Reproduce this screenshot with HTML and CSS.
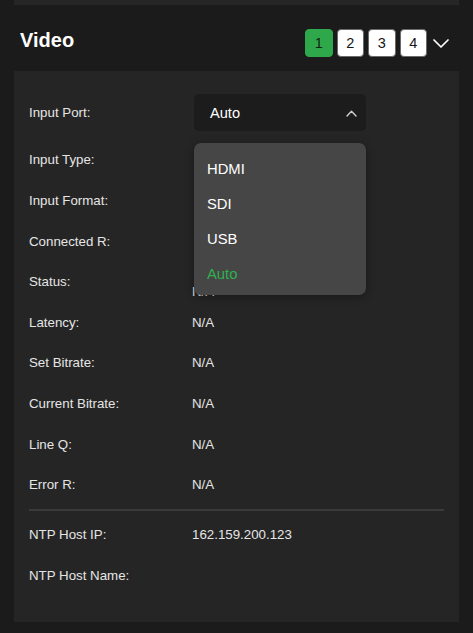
FILE: index.html
```html
<!DOCTYPE html>
<html lang="en">
<head>
<meta charset="utf-8">
<title>Video</title>
<link rel="stylesheet" href="styles.css">
</head>
<body>
<div class="prev-card"></div>
<header class="section-head">
  <h1 class="title">Video</h1>
  <div class="head-right">
    <div class="channels">
      <button class="ch active">1</button>
      <button class="ch">2</button>
      <button class="ch">3</button>
      <button class="ch">4</button>
    </div>
    <svg class="collapse" width="16" height="9" viewBox="0 0 16 9"><path d="M1 1 L8 8 L15 1" fill="none" stroke="#ffffff" stroke-width="1.7" stroke-linecap="round" stroke-linejoin="round"/></svg>
  </div>
</header>
<main class="card">
  <div class="row row-select">
    <span class="label">Input Port:</span>
    <div class="select">
      <span class="select-text">Auto</span>
      <svg class="caret" width="11" height="7" viewBox="0 0 11 7"><path d="M1 6 L5.5 1.3 L10 6" fill="none" stroke="#cfcfcf" stroke-width="1.4" stroke-linecap="round" stroke-linejoin="round"/></svg>
      <ul class="menu">
        <li class="opt">HDMI</li>
        <li class="opt">SDI</li>
        <li class="opt">USB</li>
        <li class="opt selected">Auto</li>
      </ul>
    </div>
  </div>
  <div class="row"><span class="label">Input Type:</span><span class="value"></span></div>
  <div class="row"><span class="label">Input Format:</span><span class="value"></span></div>
  <div class="row"><span class="label">Connected R:</span><span class="value"></span></div>
  <div class="row"><span class="label">Status:</span><span class="value value-low">N/A</span></div>
  <div class="row"><span class="label">Latency:</span><span class="value">N/A</span></div>
  <div class="row"><span class="label">Set Bitrate:</span><span class="value">N/A</span></div>
  <div class="row"><span class="label">Current Bitrate:</span><span class="value">N/A</span></div>
  <div class="row"><span class="label">Line Q:</span><span class="value">N/A</span></div>
  <div class="row"><span class="label">Error R:</span><span class="value">N/A</span></div>
  <div class="divider"></div>
  <div class="row"><span class="label">NTP Host IP:</span><span class="value">162.159.200.123</span></div>
  <div class="row"><span class="label">NTP Host Name:</span><span class="value"></span></div>
</main>
</body>
</html>
```

FILE: styles.css
```css
* { box-sizing: border-box; }

html, body {
  margin: 0;
  padding: 0;
  background: #1b1b1b;
}

body {
  font-family: "Liberation Sans", Arial, Helvetica, sans-serif;
  color: #e8e8e8;
  width: 473px;
  min-height: 633px;
}

.prev-card {
  height: 5px;
  margin: 0 14px;
  background: #262626;
}

.section-head {
  height: 66px;
  padding: 5px 24px 0 20px;
  display: flex;
  align-items: center;
  justify-content: space-between;
}

.title {
  margin: 0;
  font-size: 20px;
  font-weight: 700;
  color: #ffffff;
  line-height: 23px;
}

.head-right {
  display: flex;
  align-items: center;
  gap: 6px;
  margin-top: 5px;
}

.channels {
  display: flex;
  gap: 4px;
}

.ch {
  width: 27.5px;
  height: 27.5px;
  padding: 0;
  border: 1px solid #6a6a6a;
  border-radius: 4px;
  background: #ffffff;
  color: #151515;
  font-family: "Liberation Sans", Arial, sans-serif;
  font-size: 14.5px;
  line-height: 25px;
  text-align: center;
}

.ch.active {
  background: #2fa84b;
  border-color: #2fa84b;
  color: #0e2413;
}

.collapse {
  display: block;
}

.card {
  margin: 0 14px;
  background: #252525;
  padding: 23px 15px 26px;
}

.row {
  height: 40.6px;
  display: flex;
  align-items: center;
  font-size: 13.3px;
}

.row-select {
  height: 37px;
  margin-bottom: 8.7px;
}

.label {
  width: 163px;
  flex: none;
  color: #e6e6e6;
}

.value {
  color: #e6e6e6;
}

.value-low {
  margin-top: 20px;
}

.select {
  position: relative;
  margin-left: 2px;
  width: 172px;
  height: 37px;
  background: #1c1c1c;
  border-radius: 5px;
  display: flex;
  align-items: center;
  justify-content: space-between;
  padding: 0 9px 0 16px;
}

.select-text {
  font-size: 14.6px;
  color: #ffffff;
}

.caret {
  display: block;
  margin-top: 1px;
}

.menu {
  position: absolute;
  z-index: 5;
  left: 0;
  top: 49px;
  width: 172px;
  margin: 0;
  padding: 8px 0 4px;
  list-style: none;
  background: #464646;
  border-radius: 7px;
  box-shadow: 0 2px 8px rgba(0, 0, 0, 0.35);
}

.opt {
  height: 35px;
  display: flex;
  align-items: center;
  padding-left: 13px;
  font-size: 14.8px;
  color: #ffffff;
}

.opt.selected {
  color: #2fb14f;
}

.divider {
  height: 2px;
  margin: 3.5px 0 4px;
  background: #3a3a3a;
}
```
